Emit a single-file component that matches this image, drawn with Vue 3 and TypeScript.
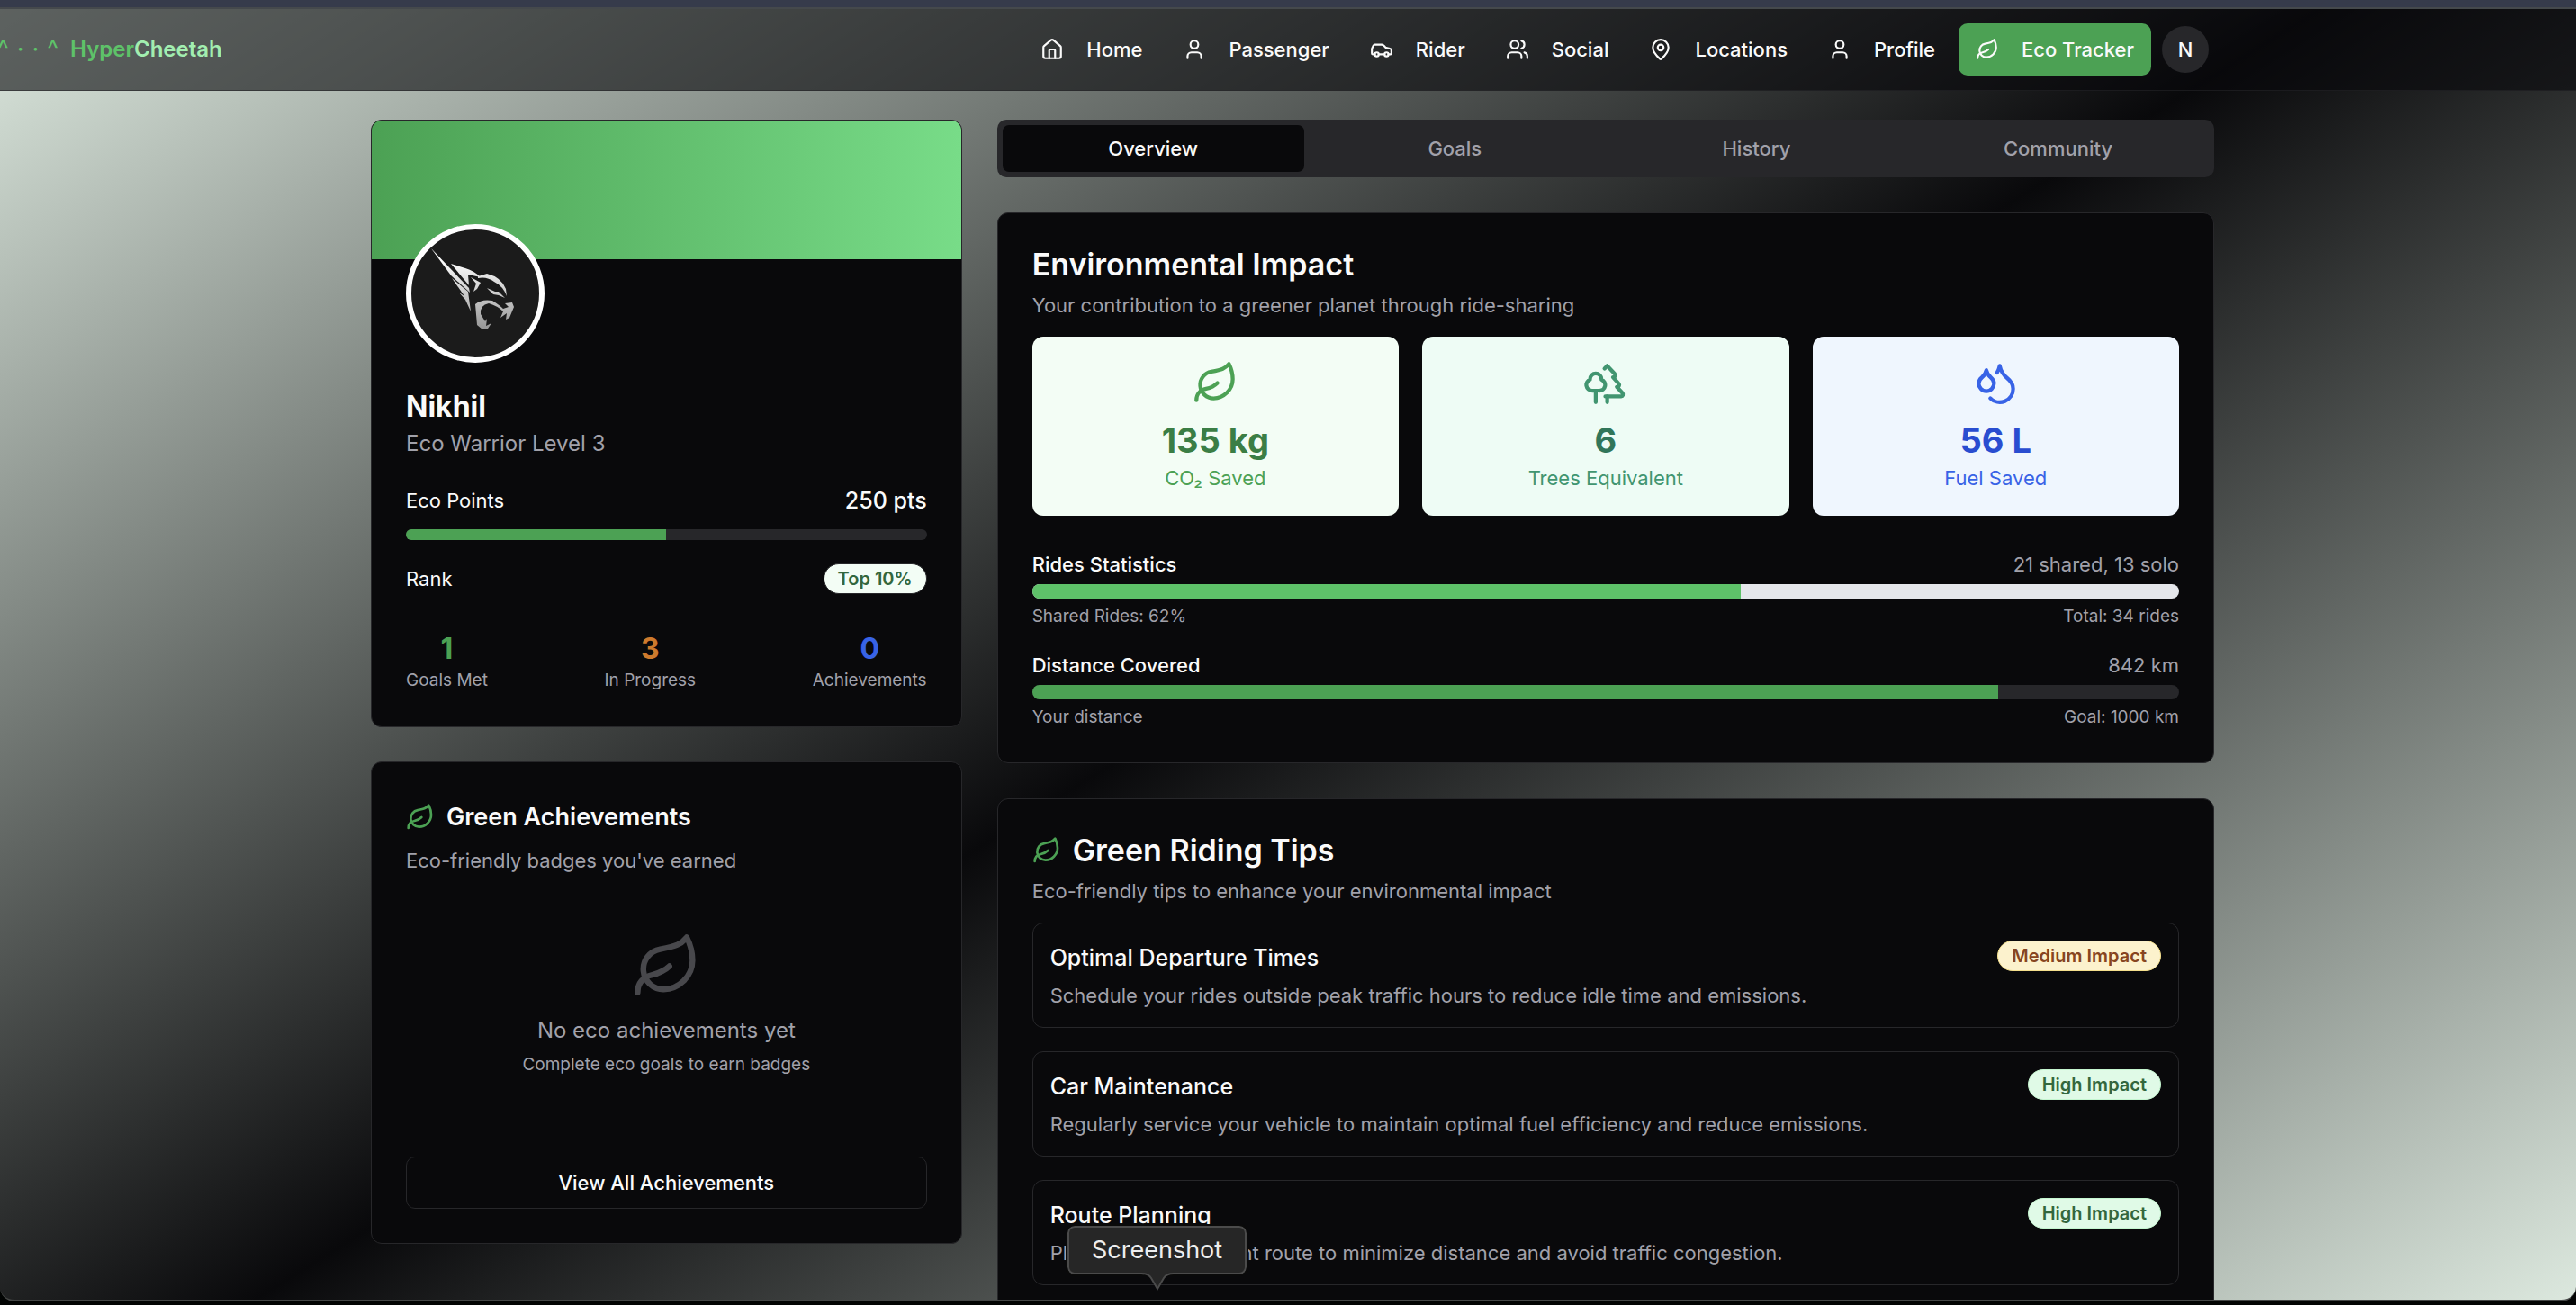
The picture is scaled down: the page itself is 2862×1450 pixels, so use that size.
<script setup lang="ts">
import { h, ref, type FunctionalComponent } from 'vue'

type IconName = 'home' | 'user' | 'car' | 'users' | 'pin' | 'leaf' | 'trees' | 'drops'

interface IconShape {
  paths: string[]
  circles?: [number, number, number][]
}

const shapes: Record<IconName, IconShape> = {
  home: {
    paths: [
      'M15 21v-8a1 1 0 0 0-1-1h-4a1 1 0 0 0-1 1v8',
      'M3 10a2 2 0 0 1 .709-1.528l7-5.999a2 2 0 0 1 2.582 0l7 5.999A2 2 0 0 1 21 10v9a2 2 0 0 1-2 2H5a2 2 0 0 1-2-2z',
    ],
  },
  user: { paths: ['M19 21v-2a4 4 0 0 0-4-4H9a4 4 0 0 0-4 4v2'], circles: [[12, 7, 4]] },
  car: {
    paths: [
      'M19 17h2c.6 0 1-.4 1-1v-3c0-.9-.7-1.7-1.5-1.9C18.7 10.6 16 10 16 10s-1.3-1.4-2.2-2.3c-.5-.4-1.1-.7-1.8-.7H5c-.6 0-1.1.4-1.4.9l-1.4 2.9A3.7 3.7 0 0 0 2 12v4c0 .6.4 1 1 1h2',
      'M9 17h6',
    ],
    circles: [[7, 17, 2], [17, 17, 2]],
  },
  users: {
    paths: [
      'M16 21v-2a4 4 0 0 0-4-4H6a4 4 0 0 0-4 4v2',
      'M22 21v-2a4 4 0 0 0-3-3.87',
      'M16 3.13a4 4 0 0 1 0 7.75',
    ],
    circles: [[9, 7, 4]],
  },
  pin: {
    paths: ['M20 10c0 4.993-5.539 10.193-7.399 11.799a1 1 0 0 1-1.202 0C9.539 20.193 4 14.993 4 10a8 8 0 0 1 16 0'],
    circles: [[12, 10, 3]],
  },
  leaf: {
    paths: [
      'M11 20A7 7 0 0 1 9.8 6.1C15.5 5 17 4.48 19 2c1 2 2 4.18 2 8 0 5.5-4.78 10-10 10Z',
      'M2 21c0-3 1.85-5.36 5.08-6C9.5 14.52 12 13 13 12',
    ],
  },
  trees: {
    paths: [
      'M10 10v.2A3 3 0 0 1 8.9 16H5a3 3 0 0 1-1-5.8V10a3 3 0 0 1 6 0Z',
      'M7 16v6',
      'M13 19v3',
      'M12 19h8.3a1 1 0 0 0 .7-1.7L18 14h.3a1 1 0 0 0 .7-1.7L16 9h.2a1 1 0 0 0 .8-1.7L13 3l-1.4 1.5',
    ],
  },
  drops: {
    paths: [
      'M7 16.3c2.2 0 4-1.83 4-4.05 0-1.16-.57-2.26-1.71-3.19S7.29 6.75 7 5.3c-.29 1.45-1.14 2.84-2.29 3.76S3 11.1 3 12.25c0 2.22 1.8 4.05 4 4.05z',
      'M12.56 6.6A10.97 10.97 0 0 0 14 3.02c.5 2.5 2 4.9 4 6.5s3 3.5 3 5.5a6.98 6.98 0 0 1-11.91 4.97',
    ],
  },
}

const AppIcon: FunctionalComponent<{ name: IconName }> = (props) =>
  h(
    'svg',
    {
      viewBox: '0 0 24 24',
      fill: 'none',
      stroke: 'currentColor',
      'stroke-width': 2,
      'stroke-linecap': 'round',
      'stroke-linejoin': 'round',
      'aria-hidden': 'true',
    },
    [
      ...shapes[props.name].paths.map((d) => h('path', { d })),
      ...(shapes[props.name].circles ?? []).map(([cx, cy, r]) => h('circle', { cx, cy, r })),
    ],
  )
AppIcon.props = ['name']

const links: { label: string; icon: IconName; active?: boolean }[] = [
  { label: 'Home', icon: 'home' },
  { label: 'Passenger', icon: 'user' },
  { label: 'Rider', icon: 'car' },
  { label: 'Social', icon: 'users' },
  { label: 'Locations', icon: 'pin' },
  { label: 'Profile', icon: 'user' },
  { label: 'Eco Tracker', icon: 'leaf', active: true },
]

const tabs = ['Overview', 'Goals', 'History', 'Community']
const activeTab = ref('Overview')

const counts = [
  { value: 1, label: 'Goals Met', tone: 'green' },
  { value: 3, label: 'In Progress', tone: 'orange' },
  { value: 0, label: 'Achievements', tone: 'blue' },
]

const impact: { icon: IconName; value: string; label: string; tone: string }[] = [
  { icon: 'leaf', value: '135 kg', label: 'CO₂ Saved', tone: 'leafy' },
  { icon: 'trees', value: '6', label: 'Trees Equivalent', tone: 'forest' },
  { icon: 'drops', value: '56 L', label: 'Fuel Saved', tone: 'water' },
]

const meters = [
  { title: 'Rides Statistics', summary: '21 shared, 13 solo', start: 'Shared Rides: 62%', end: 'Total: 34 rides', percent: 61.8, tone: 'light' },
  { title: 'Distance Covered', summary: '842 km', start: 'Your distance', end: 'Goal: 1000 km', percent: 84.2, tone: 'dark' },
]

const tips = [
  { title: 'Optimal Departure Times', text: 'Schedule your rides outside peak traffic hours to reduce idle time and emissions.', impact: 'Medium' },
  { title: 'Car Maintenance', text: 'Regularly service your vehicle to maintain optimal fuel efficiency and reduce emissions.', impact: 'High' },
  { title: 'Route Planning', text: 'Plan the most efficient route to minimize distance and avoid traffic congestion.', impact: 'High' },
]
</script>

<template>
  <div class="desktop">
    <div class="strip"></div>
    <div class="window">
      <header class="topbar">
        <a href="#" class="brand">
          <span class="face"><span>^</span><span>·</span><span>·</span><span>^</span></span>
          <span><span class="brand-a">Hyper</span><span class="brand-b">Cheetah</span></span>
        </a>
        <nav class="nav">
          <a v-for="link in links" :key="link.label" href="#" class="nav-link" :class="{ active: link.active }">
            <AppIcon :name="link.icon" class="icon-sm" />{{ link.label }}
          </a>
          <button type="button" class="account">N</button>
        </nav>
      </header>

      <main class="content">
        <div class="column">
          <section class="card profile">
            <div class="cover"></div>
            <div class="profile-body">
              <div class="avatar">
                <svg viewBox="0 0 154 154" aria-hidden="true">
                  <defs>
                    <linearGradient id="steel" x1="0" y1="0" x2="0" y2="154" gradientUnits="userSpaceOnUse">
                      <stop offset="0.25" stop-color="#fff" />
                      <stop offset="0.8" stop-color="#8e8e8e" />
                    </linearGradient>
                  </defs>
                  <g fill="url(#steel)">
                    <path d="M28 27 L70 71 L71 76 L50 57 Z" />
                    <path d="M50 44 L66 49 Q76 52 83 59 L69 56 L70 68 Z" />
                    <path d="M51 60 L69 75 L72 97 L66 84 L59 76 L65 80 Z" />
                    <path d="M72 59 L83 65 L79 72 L75 75 L78 66 Z" />
                    <path d="M80 58 L90 55 Q106 59 111 72 L112 80 Q108 69 98 64 Q90 58 80 60 Z" />
                    <path d="M90 71 L99 75 L103 75 L110 82 L103 79 L97 78 Z" />
                    <path d="M77 89 Q84 83 96 85 Q104 90 108 94 L114 92 L110 88 L118 87 L120 92 L115 104 L111 106 L112 99 L105 104 L108 97 Q102 91 92 88 Q82 90 83 100 L88 108 L90 105 L89 113 L95 110 L91 116 L85 117 L79 112 Z" />
                  </g>
                </svg>
              </div>
              <h1 class="name">Nikhil</h1>
              <p class="level">Eco Warrior Level 3</p>
              <div class="row points"><span>Eco Points</span><strong>250 pts</strong></div>
              <div class="bar thin"><div class="fill dark" :style="{ width: '50%' }"></div></div>
              <div class="row rank"><span>Rank</span><span class="badge top">Top 10%</span></div>
              <div class="counts">
                <div v-for="c in counts" :key="c.label" class="count">
                  <strong :class="c.tone">{{ c.value }}</strong>
                  <span>{{ c.label }}</span>
                </div>
              </div>
            </div>
          </section>

          <section class="card padded">
            <h2 class="subtitle"><AppIcon name="leaf" class="icon-md" />Green Achievements</h2>
            <p class="desc">Eco-friendly badges you've earned</p>
            <div class="empty">
              <AppIcon name="leaf" class="icon-xl" />
              <p class="empty-title">No eco achievements yet</p>
              <p class="empty-note">Complete eco goals to earn badges</p>
            </div>
            <button type="button" class="outline">View All Achievements</button>
          </section>
        </div>

        <div class="column wide">
          <div class="tabs" role="tablist">
            <button
              v-for="tab in tabs"
              :key="tab"
              type="button"
              role="tab"
              class="tab"
              :class="{ selected: tab === activeTab }"
              :aria-selected="tab === activeTab"
              @click="activeTab = tab"
            >
              {{ tab }}
            </button>
          </div>

          <section class="card padded">
            <h2 class="title">Environmental Impact</h2>
            <p class="desc">Your contribution to a greener planet through ride-sharing</p>
            <div class="tiles">
              <div v-for="t in impact" :key="t.label" class="tile" :class="t.tone">
                <AppIcon :name="t.icon" class="icon-lg" />
                <strong>{{ t.value }}</strong>
                <span>{{ t.label }}</span>
              </div>
            </div>
            <div class="meters">
              <div v-for="m in meters" :key="m.title" class="meter">
                <div class="row"><span class="meter-title">{{ m.title }}</span><span class="muted">{{ m.summary }}</span></div>
                <div class="bar" :class="m.tone"><div class="fill" :class="m.tone" :style="{ width: m.percent + '%' }"></div></div>
                <div class="row small"><span>{{ m.start }}</span><span>{{ m.end }}</span></div>
              </div>
            </div>
          </section>

          <section class="card padded">
            <h2 class="title"><AppIcon name="leaf" class="icon-md" />Green Riding Tips</h2>
            <p class="desc">Eco-friendly tips to enhance your environmental impact</p>
            <ul class="tips">
              <li v-for="tip in tips" :key="tip.title" class="tip">
                <div>
                  <h3>{{ tip.title }}</h3>
                  <p>{{ tip.text }}</p>
                </div>
                <span class="badge" :class="tip.impact.toLowerCase()">{{ tip.impact }} Impact</span>
              </li>
            </ul>
          </section>
        </div>
      </main>
    </div>

    <div class="tooltip" role="tooltip">
      Screenshot
      <svg class="tail" viewBox="0 0 36 20" aria-hidden="true">
        <path d="M0 0 H36 V1 Q28 1 25 6 L18 18 L11 6 Q8 1 0 1 Z" fill="#262626" />
        <path d="M0 1 Q8 1 11 6 L18 18 L25 6 Q28 1 36 1" fill="none" stroke="#4b4b4b" stroke-width="2" />
      </svg>
    </div>
  </div>
</template>

<style>
body {
  background: #000;
}
</style>

<style scoped>
.desktop {
  position: relative;
  display: flex;
  flex-direction: column;
  box-sizing: border-box;
  height: 100vh;
  padding-bottom: 4px;
  overflow: hidden;
  background: #020403;
  color: #fafafa;
  font-family: Inter, 'Liberation Sans', sans-serif;
  font-size: 22px;
  line-height: 32px;
}
.desktop * {
  box-sizing: border-box;
}
h1, h2, h3, p, ul {
  margin: 0;
  padding: 0;
}
a {
  color: inherit;
  text-decoration: none;
}
button {
  border: 0;
  padding: 0;
  color: inherit;
  font: inherit;
}
svg {
  display: block;
  flex: none;
}
.strip {
  flex: none;
  height: 8px;
  background: #363b4b;
}
.window {
  flex: 1;
  min-height: 0;
  overflow: hidden;
  border-top: 2px solid #45494c;
  border-bottom: 2px solid #454746;
  border-radius: 0 0 16px 16px;
  background: linear-gradient(148deg, #dce8de, #09090b 50%, #dce8de);
}
.topbar {
  display: flex;
  align-items: center;
  justify-content: space-between;
  height: 91px;
  padding-right: 408px;
  border-bottom: 1px solid rgba(39, 39, 42, 0.6);
  background: rgba(9, 9, 11, 0.6);
}
.brand {
  display: flex;
  align-items: center;
  gap: 13px;
  margin-left: -3px;
  font-size: 24px;
  font-weight: 600;
}
.face {
  display: flex;
  gap: 9px;
  color: #5ec269;
  font-size: 27px;
  font-weight: 400;
}
.brand-a {
  color: #5ec269;
}
.brand-b {
  color: #a2eeb0;
}
.nav {
  display: flex;
  align-items: center;
  gap: 7px;
}
.nav-link {
  display: flex;
  align-items: center;
  gap: 25px;
  height: 58px;
  padding: 0 19px;
  border-radius: 10px;
  font-weight: 500;
}
.nav-link.active {
  background: #4ca154;
}
.account {
  width: 52px;
  height: 52px;
  margin-left: 5px;
  border-radius: 50%;
  background: #27272a;
  font-weight: 500;
}
.icon-sm {
  width: 26px;
  height: 26px;
}
.icon-md {
  width: 32px;
  height: 32px;
  color: #4ca154;
}
.icon-lg {
  width: 51px;
  height: 51px;
}
.icon-xl {
  width: 77px;
  height: 77px;
  color: #48484c;
}
.content {
  display: grid;
  grid-template-columns: repeat(3, minmax(0, 1fr));
  align-items: start;
  gap: 39px;
  max-width: 2048px;
  margin: 0 auto;
  padding: 32px 0 0 10px;
  box-sizing: content-box !important;
}
.column {
  display: flex;
  flex-direction: column;
  gap: 38px;
}
.wide {
  grid-column: span 2;
  gap: 39px;
}
.card {
  overflow: hidden;
  border: 1px solid #27272a;
  border-radius: 12px;
  background: #09090b;
}
.padded {
  padding: 38px;
}
.cover {
  height: 154px;
  background: linear-gradient(90deg, #4ca154, #78dc88);
}
.profile-body {
  padding: 0 38px 38px;
}
.avatar {
  position: relative;
  width: 154px;
  height: 154px;
  margin-top: -39px;
  overflow: hidden;
  border: 6px solid #fff;
  border-radius: 50%;
  background: #1b1b1b;
}
.avatar svg {
  width: 154px;
  height: 154px;
  margin: -6px;
}
.name {
  margin-top: 26px;
  font-size: 32px;
  font-weight: 700;
  line-height: 45px;
}
.level {
  color: #a1a1aa;
  font-size: 24px;
  line-height: 38px;
}
.row {
  display: flex;
  align-items: center;
  justify-content: space-between;
}
.points {
  margin: 25px 0 13px;
  line-height: 38px;
}
.points strong {
  font-size: 25px;
  font-weight: 500;
}
.bar {
  height: 16px;
  overflow: hidden;
  border-radius: 8px;
  background: #27272a;
}
.bar.thin {
  height: 12px;
}
.bar.light {
  background: #e5e7eb;
}
.fill {
  height: 100%;
}
.fill.dark {
  background: #4ca154;
}
.fill.light {
  background: #5ec269;
}
.rank {
  margin: 26px 0 38px;
}
.badge {
  flex: none;
  height: 34px;
  padding: 0 15px;
  border: 1px solid #27272a;
  border-radius: 17px;
  font-size: 20px;
  font-weight: 600;
  line-height: 32px;
}
.badge.top {
  background: #f3fdf5;
  color: #33673d;
}
.badge.high {
  border-color: #c5f6d0;
  background: #e0fae7;
  color: #33673d;
}
.badge.medium {
  border-color: #f5e08e;
  background: #fcf2cd;
  color: #874520;
}
.counts {
  display: flex;
  justify-content: space-between;
}
.count {
  display: flex;
  flex-direction: column;
  align-items: center;
}
.count strong {
  font-size: 32px;
  font-weight: 700;
  line-height: 45px;
}
.count span {
  color: #a1a1aa;
  font-size: 19px;
  line-height: 26px;
}
.green {
  color: #4ca154;
}
.orange {
  color: #cd7a2d;
}
.blue {
  color: #3863e6;
}
.subtitle,
.title {
  display: flex;
  align-items: center;
  gap: 13px;
  margin-bottom: 10px;
  font-weight: 600;
}
.subtitle {
  font-size: 27px;
  line-height: 45px;
}
.title {
  font-size: 34px;
  line-height: 38px;
}
.desc {
  color: #a1a1aa;
}
.empty {
  display: flex;
  flex-direction: column;
  align-items: center;
  padding: 63px 0 89px;
  color: #a1a1aa;
}
.empty-title {
  margin: 14px 0 6px;
  font-size: 24px;
  line-height: 38px;
}
.empty-note {
  font-size: 19px;
  line-height: 26px;
}
.outline {
  width: 100%;
  height: 58px;
  border: 1px solid #27272a;
  border-radius: 10px;
  background: #09090b;
  font-weight: 500;
}
.tabs {
  display: flex;
  height: 64px;
  padding: 6px;
  border-radius: 10px;
  background: #27272a;
}
.tab {
  flex: 1;
  border-radius: 7px;
  background: transparent;
  color: #a1a1aa;
  font-weight: 500;
}
.tab.selected {
  background: #09090b;
  color: #fafafa;
}
.tiles {
  display: grid;
  grid-template-columns: repeat(3, minmax(0, 1fr));
  gap: 26px;
  margin: 19px 0 38px;
}
.tile {
  display: flex;
  flex-direction: column;
  align-items: center;
  padding: 26px;
  border-radius: 12px;
}
.tile strong {
  margin-top: 13px;
  font-size: 38px;
  font-weight: 700;
  line-height: 51px;
}
.leafy {
  background: #f3fdf5;
  color: #4ca154;
}
.leafy strong {
  color: #3b7e45;
}
.forest {
  background: #eefcf5;
  color: #419570;
}
.forest strong {
  color: #31765a;
}
.water {
  background: #eff6fe;
  color: #3863e6;
}
.water strong {
  color: #294dd0;
}
.meters {
  display: flex;
  flex-direction: column;
  gap: 26px;
}
.meter {
  display: flex;
  flex-direction: column;
  gap: 6px;
}
.meter-title {
  font-weight: 500;
}
.muted {
  color: #a1a1aa;
}
.small {
  padding-top: 2px;
  color: #a1a1aa;
  font-size: 19px;
  line-height: 24px;
}
.tips {
  display: flex;
  flex-direction: column;
  gap: 26px;
  margin-top: 19px;
  list-style: none;
}
.tip {
  display: flex;
  align-items: flex-start;
  justify-content: space-between;
  padding: 19px;
  border: 1px solid #27272a;
  border-radius: 12px;
}
.tip h3 {
  margin-bottom: 6px;
  font-size: 25px;
  font-weight: 500;
  line-height: 39px;
}
.tip p {
  color: #a1a1aa;
}
.tooltip {
  position: absolute;
  bottom: 34px;
  left: 1186px;
  height: 54px;
  padding: 0 25px;
  border: 2px solid #4b4b4b;
  border-radius: 8px;
  outline: 2px solid #0a0a0a;
  background: #262626;
  color: #eee;
  font-size: 27px;
  line-height: 50px;
}
.tail {
  position: absolute;
  top: 100%;
  left: 50%;
  width: 36px;
  height: 20px;
  margin-left: -18px;
}
</style>
